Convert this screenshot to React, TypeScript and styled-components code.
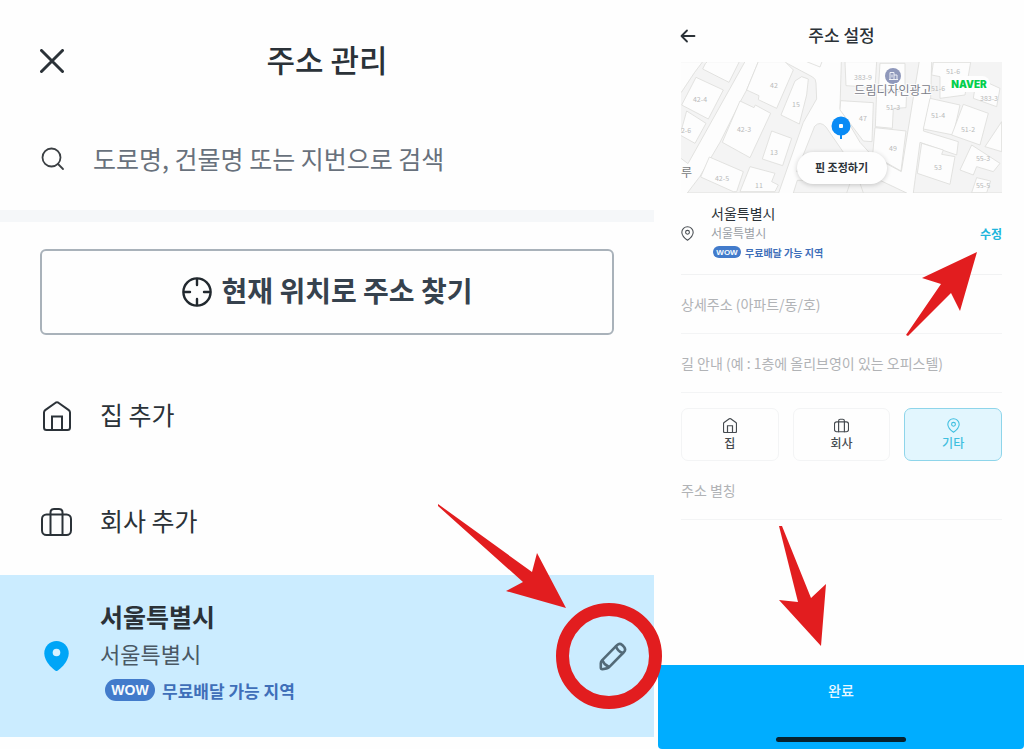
import React from "react";
import styled, { createGlobalStyle, css } from "styled-components";

const GlobalStyle = createGlobalStyle`
  *, *::before, *::after { box-sizing: border-box; }
  body {
    margin: 0;
    background: #fefefe;
    color: #2b3238;
    font-family: "Noto Sans CJK KR", "Noto Sans", sans-serif;
  }
  button, input { font: inherit; color: inherit; margin: 0; padding: 0; border: 0; background: none; }
  button { cursor: pointer; }
  h1, h2, p, fieldset { margin: 0; padding: 0; border: 0; }
  svg { display: block; flex: none; }
`;

const Page = styled.main`
  display: grid;
  grid-template-columns: minmax(0, 654fr) minmax(0, 366fr);
  column-gap: 4px;
  min-height: 100vh;
`;

/* Address list */

const ListScreen = styled.section`
  position: relative;
  z-index: 1;
`;

const ListHeader = styled.header`
  display: grid;
  grid-template-columns: 48px 1fr 48px;
  align-items: center;
  height: 122px;
  padding: 0 28px;
`;

const IconButton = styled.button`
  position: relative;
  display: flex;
  align-items: center;
  justify-content: center;
  width: 48px;
  height: 48px;
`;

const ListTitle = styled.h1`
  padding-bottom: 4px;
  font-size: 31px;
  font-weight: 500;
  line-height: 40px;
  text-align: center;
`;

const SearchBar = styled.label`
  display: flex;
  align-items: center;
  gap: 28px;
  height: 88px;
  padding: 0 40px 14px;
`;

const SearchInput = styled.input`
  flex: 1;
  min-width: 0;
  height: 40px;
  padding-bottom: 2px;
  font-size: 25px;
  outline: none;
  &::placeholder { color: #68717c; opacity: 1; }
`;

const Band = styled.div`
  height: 12px;
  background: #f5f7f9;
`;

const LocateButton = styled.button`
  display: flex;
  align-items: center;
  justify-content: center;
  gap: 10px;
  width: calc(100% - 80px);
  height: 86px;
  margin: 27px 40px 28px;
  border: 2px solid #a9b2ba;
  border-radius: 6px;
  color: #36424e;
  font-size: 28px;
  font-weight: 700;
`;

const AddRow = styled.button`
  display: grid;
  grid-template-columns: 60px 1fr;
  align-items: center;
  width: 100%;
  height: 106px;
  padding: 0 40px;
  font-size: 25px;
  text-align: left;
`;

const RowLabel = styled.span`
  padding-bottom: 4px;
`;

const IconSlot = styled.span`
  display: flex;
  justify-content: center;
  width: 33px;
`;

const SelectedRow = styled.div`
  display: grid;
  grid-template-columns: 60px 1fr 48px;
  align-items: center;
  height: 162px;
  padding: 0 17px 0 40px;
  background: #cbecff;
`;

const AddressText = styled.div<{ $small?: boolean }>`
  padding-bottom: ${(p) => (p.$small ? 2 : 6)}px;
`;

const Name = styled.p<{ $small?: boolean }>`
  font-size: ${(p) => (p.$small ? 14 : 25)}px;
  font-weight: ${(p) => (p.$small ? 400 : 700)};
  line-height: ${(p) => (p.$small ? 20 : 38)}px;
`;

const Detail = styled.p<{ $small?: boolean }>`
  color: ${(p) => (p.$small ? "#9a9fa5" : "#4a5965")};
  font-size: ${(p) => (p.$small ? 12 : 22)}px;
  line-height: ${(p) => (p.$small ? 19 : 36)}px;
`;

const Benefit = styled.p<{ $small?: boolean }>`
  display: flex;
  align-items: center;
  gap: ${(p) => (p.$small ? 4 : 7)}px;
  height: ${(p) => (p.$small ? 20 : 38)}px;
  padding-left: ${(p) => (p.$small ? 2 : 5)}px;
  color: #3f6fb9;
  font-size: ${(p) => (p.$small ? 10 : 17)}px;
  font-weight: 700;
  white-space: nowrap;
`;

const WowBadge = styled.span<{ $small?: boolean }>`
  display: inline-flex;
  align-items: center;
  justify-content: center;
  width: ${(p) => (p.$small ? 28 : 50)}px;
  height: ${(p) => (p.$small ? 12 : 22)}px;
  border-radius: 11px;
  background: #427bcb;
  color: #f4faff;
  font-family: "Liberation Sans", sans-serif;
  font-size: ${(p) => (p.$small ? 8 : 14)}px;
`;

/* Red hint marks laid over the screens */

const Mark = styled.svg<{ $at: "edit" | "change" | "done" }>`
  position: absolute;
  fill: #e21d1f;
  pointer-events: none;
  ${(p) => p.$at === "edit" && css`top: -132px; right: -28px;`}
  ${(p) => p.$at === "change" && css`top: 26px; right: 21px;`}
  ${(p) => p.$at === "done" && css`bottom: calc(100% + 15px); left: calc(50% - 66px);`}
`;

/* Address form */

const FormScreen = styled.section`
  display: flex;
  flex-direction: column;
`;

const FormHeader = styled.header`
  display: grid;
  grid-template-columns: 24px 1fr 24px;
  align-items: center;
  height: 62px;
  padding: 10px 17px 0 18px;
`;

const BackButton = styled.button`
  display: flex;
  align-items: center;
  justify-content: center;
  height: 24px;
`;

const FormTitle = styled.h2`
  padding-bottom: 2px;
  font-size: 17px;
  font-weight: 500;
  line-height: 24px;
  text-align: center;
`;

const FormBody = styled.form`
  display: flex;
  flex: 1;
  flex-direction: column;
  padding: 0 22px 0 23px;
`;

const MapBox = styled.div`
  position: relative;
  height: 131px;
`;

const MapDrawing = styled.svg`
  width: 100%;
  height: 131px;
`;

const AdjustPin = styled.button`
  position: absolute;
  top: 90px;
  left: 50%;
  width: 90px;
  height: 32px;
  padding-bottom: 2px;
  transform: translateX(-50%);
  border-radius: 16px;
  background: #fefefe;
  box-shadow: 0 1px 5px rgba(0, 0, 0, 0.2);
  font-size: 11px;
  font-weight: 700;
`;

const AddressRow = styled.div`
  display: grid;
  grid-template-columns: 30px 1fr auto;
  align-items: center;
  height: 82px;
  border-bottom: 1px solid #f1f2f3;
`;

const ChangeButton = styled.button`
  position: relative;
  height: 24px;
  padding-bottom: 1px;
  color: #1fb5dc;
  font-size: 12px;
  font-weight: 700;
`;

const Field = styled.input`
  width: 100%;
  height: 59px;
  border-bottom: 1px solid #f3f4f5;
  border-radius: 0;
  font-size: 14px;
  outline: none;
  &::placeholder { color: #b1b3b6; opacity: 1; }
`;

const Choices = styled.fieldset`
  display: grid;
  grid-template-columns: repeat(3, 1fr);
  gap: 14px;
  margin-top: 15px;
`;

const Choice = styled.label`
  display: flex;
  flex-direction: column;
  align-items: center;
  height: 53px;
  padding-top: 9px;
  border: 1px solid #f3f4f5;
  border-radius: 7px;
  color: #464b50;
  font-size: 12px;
  font-weight: 500;
  line-height: 20px;
  cursor: pointer;
  &:has(input:checked) {
    border-color: #8ed5ea;
    background: #e2f6fe;
    color: #3fbfe0;
  }
`;

const HiddenRadio = styled.input`
  position: absolute;
  opacity: 0;
  pointer-events: none;
`;

const Footer = styled.footer`
  position: relative;
  height: 84px;
  border-radius: 0 0 4px 4px;
  background: #00adff;
`;

const DoneButton = styled.button`
  display: block;
  width: 100%;
  height: 52px;
  padding-bottom: 2px;
  color: #e9f8ff;
  font-size: 14px;
  font-weight: 500;
`;

const HomeIndicator = styled.div`
  width: 130px;
  height: 5px;
  margin: 20px auto 0;
  border-radius: 3px;
  background: #06222f;
`;

/* Icons */

const stroke = { fill: "none", stroke: "currentColor", strokeLinecap: "round", strokeLinejoin: "round" } as const;

const HomeIcon = ({ width = 28, height = 30, weight = 2 }) => (
  <svg width={width} height={height} viewBox="0 0 28 30" {...stroke} strokeWidth={weight}>
    <path d="M1 11.5Q1 10 2.2 9.1L12.6 1.7Q14 .8 15.4 1.7L25.8 9.1Q27 10 27 11.5V26.5Q27 29 24.5 29H3.5Q1 29 1 26.5Z" />
    <path d="M9 29V15.5H19V29" strokeLinejoin="miter" />
  </svg>
);

const CaseIcon = ({ width = 31, height = 28, weight = 2 }) => (
  <svg width={width} height={height} viewBox="0 0 31 28" {...stroke} strokeWidth={weight}>
    <rect x="1" y="6.5" width="29" height="20.5" rx="4.5" />
    <path d="M9.5 27V4.5Q9.5 1 13 1H18Q21.5 1 21.5 4.5V27" />
  </svg>
);

const PinIcon = ({ color }: { color?: string }) => (
  <svg width="13" height="15" viewBox="0 0 12 14" {...stroke} stroke={color || "currentColor"}>
    <path d="M6 13.3C4.8 12.5.7 9.7.7 5.9A5.3 5.2 0 0 1 11.3 5.9C11.3 9.7 7.2 12.5 6 13.3Z" />
    <circle cx="6" cy="5.9" r="1.8" />
  </svg>
);

const parcelsWest = [
  "30,20 98,20 74,52 34,112 30,112",
  "106,26 112,20 208,20 177,82 98,42",
  "78,67 160,105 115,192 35,150",
  "50,168 108,205 75,265 30,240",
  "265,20 345,20 370,45 320,160 265,134 267,122 230,105",
  "210,138 252,158 256,150 302,175 240,308 157,262",
  "395,65 415,72 410,120 388,207 333,180 375,78",
  "305,228 365,250 338,332 277,312",
  "118,306 220,350 200,410 190,410 92,366",
  "240,335 315,355 305,380 325,390 315,410 210,410",
];

const parcelsEast = [
  "45,20 140,20 135,97 48,92",
  "150,25 225,25 225,104 145,104",
  "140,110 230,110 228,158 190,160 187,220 136,215",
  "32,137 130,143 126,260 100,258 30,165",
  "135,218 228,228 213,348 128,300",
  "310,22 422,22 405,120 330,130 330,65 305,60",
  "440,68 510,100 500,155 430,130",
  "300,130 390,150 370,240 280,222",
  "400,148 475,175 450,270 365,240",
  "515,200 465,275 515,290",
  "275,265 340,285 335,298 375,305 360,388 262,355",
  "425,270 510,325 490,350 440,335 430,360 390,345",
  "440,368 482,378 470,413 425,413",
];

const lots: [number, number, string][] = [
  [19, 40, "42-4"], [5, 71, "2-6"], [93, 26, "42"], [115, 45, "15"], [63, 70, "42-3"],
  [93, 93, "13"], [41, 119, "42-5"], [78, 126, "11"], [182, 18, "383-9"], [212, 48, "51-3"],
  [182, 59, "47"], [212, 89, "49"], [272, 12, "51-6"], [257, 29, "51-6"], [308, 39, "383-3"],
  [257, 56, "51-4"], [287, 70, "51-2"], [257, 108, "53"], [302, 99, "55-3"], [302, 126, "55-5"],
];

const StreetMap = () => (
  <MapDrawing viewBox="0 0 321 131" preserveAspectRatio="xMidYMid slice" role="img" aria-label="지도">
    <rect width="321" height="131" fill="#fdfdfd" />
    <g transform="translate(-11 -7) scale(.3333)" fill="#f4f4f4" stroke="#dddddb" strokeWidth="2.5">
      <path d="M30 18H226L54 326L30 308Z" />
      <path d="M266 18H338L428 66Q438 72 438 84L440 132L400 202L326 414H52L90 364L150 262L212 138L230 105Z" />
      <path d="M434 214Q450 196 468 216L560 350H380Z" />
      <path d="M410 20L450 36L456 20" fill="none" />
      {parcelsWest.map((p) => <polygon key={p} points={p} fill="#fdfdfd" />)}
    </g>
    <g transform="translate(149 -7) scale(.3333)" fill="#f4f4f4" stroke="#dddddb" strokeWidth="2.5">
      <path d="M34 18H268L246 152L214 350L128 304L90 262L30 160Z" />
      <path d="M305 18H520V414H250L270 262L380 300L385 260L280 228L302 130Z" />
      <path d="M-110 414L-98 376H150L230 414Z" />
      {parcelsEast.map((p) => <polygon key={p} points={p} fill="#fdfdfd" />)}
      <path d="M60 385L50 414M90 385L100 414" fill="none" />
    </g>
    <g fill="#b9babb" fontSize="7" textAnchor="middle">
      {lots.map(([x, y, label]) => <text key={`${x}-${y}`} x={x} y={y}>{label}</text>)}
    </g>
    <text x="0" y="115" fill="#777b80" fontSize="12">루</text>
    <circle cx="212" cy="14" r="8" fill="#8f98bb" />
    <path d="M209 17.5V10.5H213V17.5M213 13H216V17.5M208 17.5H217M211 12.5V15.5" fill="none" stroke="#eef0f7" />
    <text x="212" y="33" fill="#7b808a" fontSize="12" textAnchor="middle" stroke="#fdfdfd" strokeWidth="2" paintOrder="stroke">드림디자인광고</text>
    <rect x="267" y="14" width="42" height="16" rx="8" fill="#fefefe" />
    <text x="288" y="26" fill="#03cf4d" fontFamily="Inter, sans-serif" fontSize="10" fontWeight="900" textAnchor="middle">NAVER</text>
    <path d="M160 70V77" stroke="#0a8bf5" strokeWidth="2" />
    <circle cx="160" cy="64" r="9.5" fill="#0a8bf5" />
    <rect x="158" y="62" width="4" height="4" rx="1" fill="#fff" />
  </MapDrawing>
);

export default function App() {
  return (
    <>
      <GlobalStyle />
      <Page>
        <ListScreen>
          <ListHeader>
            <IconButton type="button" aria-label="닫기">
              <svg width="24" height="24" viewBox="0 0 24 24" {...stroke} strokeWidth="3">
                <path d="M1.5 1.5L22.5 22.5M22.5 1.5L1.5 22.5" />
              </svg>
            </IconButton>
            <ListTitle>주소 관리</ListTitle>
          </ListHeader>
          <SearchBar>
            <svg width="25" height="24" viewBox="0 0 25 24" {...stroke} stroke="#3b3f43" strokeWidth="1.8">
              <circle cx="11.5" cy="10.5" r="9" />
              <path d="M18 17L23 22" />
            </svg>
            <SearchInput type="search" aria-label="주소 검색" placeholder="도로명, 건물명 또는 지번으로 검색" />
          </SearchBar>
          <Band />
          <LocateButton type="button">
            <svg width="30" height="30" viewBox="0 0 30 30" {...stroke} stroke="#22292f" strokeWidth="2.4">
              <circle cx="15" cy="15" r="13.6" />
              <path d="M15 2V8M15 22V28M2 15H8M22 15H28" />
            </svg>
            <RowLabel>현재 위치로 주소 찾기</RowLabel>
          </LocateButton>
          <AddRow type="button">
            <IconSlot><HomeIcon /></IconSlot>
            <RowLabel>집 추가</RowLabel>
          </AddRow>
          <AddRow type="button">
            <IconSlot><CaseIcon /></IconSlot>
            <RowLabel>회사 추가</RowLabel>
          </AddRow>
          <SelectedRow>
            <IconSlot>
              <svg width="25" height="30" viewBox="0 0 25 30">
                <path d="M12.5 30C11 30 .3 21.5 .3 12.2A12.2 12.2 0 0 1 24.7 12.2C24.7 21.5 14 30 12.5 30Z" fill="#00a5f7" />
                <circle cx="12.5" cy="11.5" r="3.8" fill="#d8f1ff" />
              </svg>
            </IconSlot>
            <AddressText>
              <Name>서울특별시</Name>
              <Detail>서울특별시</Detail>
              <Benefit><WowBadge>WOW</WowBadge>무료배달 가능 지역</Benefit>
            </AddressText>
            <IconButton type="button" aria-label="주소 수정">
              <svg width="28" height="29" viewBox="0 0 28 29" {...stroke} stroke="#536a78" strokeWidth="2.6">
                <path d="M1.8 25.6V21.2Q1.8 19.6 3 18.4L18 3.2Q20.6.8 23.2 3L25 4.8Q27.2 7.4 25 10L10.4 24.8Q9.2 26 7.6 26.4L3.4 27.2Q1.8 27.2 1.8 25.6Z" />
                <path d="M3.6 18.8Q5.2 23 9.8 24.8M17 4.4Q18.4 9 23.6 11" />
              </svg>
              <Mark $at="edit" width="235" height="212" viewBox="0 0 235 212" aria-hidden="true">
                <path d="M8 4L102 72L107 53L136 108L76 91L93 82L8 6Z" />
                <circle cx="179" cy="156" r="46.5" fill="none" stroke="#e21d1f" strokeWidth="13" />
              </Mark>
            </IconButton>
          </SelectedRow>
        </ListScreen>

        <FormScreen>
          <FormHeader>
            <BackButton type="button" aria-label="뒤로">
              <svg width="16" height="14" viewBox="0 0 16 14" {...stroke} strokeWidth="1.8">
                <path d="M14.5 7H1.5M7 1.5L1.5 7L7 12.5" />
              </svg>
            </BackButton>
            <FormTitle>주소 설정</FormTitle>
          </FormHeader>
          <FormBody>
            <MapBox>
              <StreetMap />
              <AdjustPin type="button">핀 조정하기</AdjustPin>
            </MapBox>
            <AddressRow>
              <PinIcon color="#4a4f54" />
              <AddressText $small>
                <Name $small>서울특별시</Name>
                <Detail $small>서울특별시</Detail>
                <Benefit $small><WowBadge $small>WOW</WowBadge>무료배달 가능 지역</Benefit>
              </AddressText>
              <ChangeButton type="button">
                수정
                <Mark $at="change" width="80" height="92" viewBox="0 0 80 92" aria-hidden="true">
                  <path d="M76 4L21 30L40 36L5 87L7 88L50 45L59 63Z" />
                </Mark>
              </ChangeButton>
            </AddressRow>
            <Field aria-label="상세주소" placeholder="상세주소 (아파트/동/호)" />
            <Field aria-label="길 안내" placeholder="길 안내 (예 : 1층에 올리브영이 있는 오피스텔)" />
            <Choices aria-label="주소 종류">
              <Choice>
                <HiddenRadio type="radio" name="kind" />
                <HomeIcon width={14} height={15} weight={2.4} />
                집
              </Choice>
              <Choice>
                <HiddenRadio type="radio" name="kind" />
                <CaseIcon width={15} height={15} weight={2.4} />
                회사
              </Choice>
              <Choice>
                <HiddenRadio type="radio" name="kind" defaultChecked />
                <PinIcon />
                기타
              </Choice>
            </Choices>
            <Field aria-label="주소 별칭" placeholder="주소 별칭" />
          </FormBody>
          <Footer>
            <DoneButton type="button">완료</DoneButton>
            <HomeIndicator />
            <Mark $at="done" width="55" height="128" viewBox="0 0 55 128" aria-hidden="true">
              <path d="M4 4L7 4L36 76L51 62L46 124L4 78L23 80Z" />
            </Mark>
          </Footer>
        </FormScreen>
      </Page>
    </>
  );
}
